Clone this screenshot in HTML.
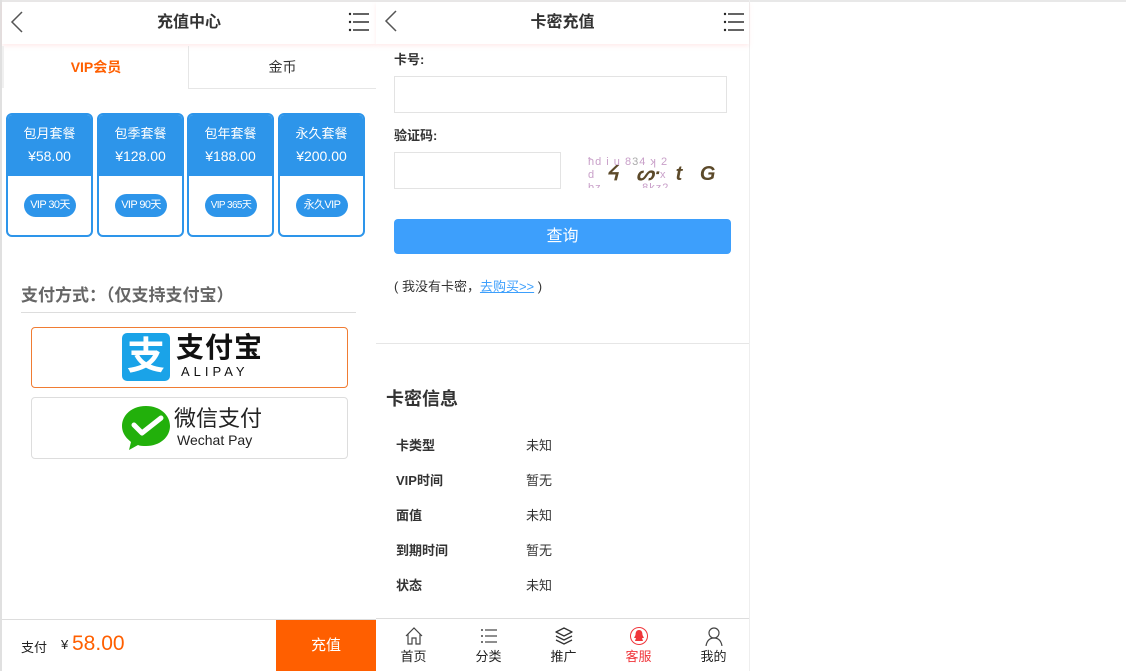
<!DOCTYPE html>
<html><head><meta charset="utf-8"><style>
*{margin:0;padding:0;box-sizing:border-box}
body{width:1126px;height:671px;background:#fff;font-family:"Liberation Sans","Noto Sans CJK SC",sans-serif;position:relative;overflow:hidden;color:#333}
.a{position:absolute}
.hdr{height:42px;box-shadow:0 2px 4px rgba(255,200,200,.35);background:#fff}
.title{font-size:16px;font-weight:bold;text-align:center;line-height:42px;color:#333}
.card{position:absolute;top:113px;width:87px;height:124px;border:2px solid #2d95ea;border-radius:6px;overflow:hidden}
.card .t{background:#2d95ea;height:61px;color:#fff;text-align:center;font-size:13px;padding-top:7px;line-height:23px}
.card .t b{font-weight:normal;font-size:14px}
.pill{position:absolute;left:16px;top:79px;width:52px;height:23px;border-radius:12px;background:#2d95ea;color:#fff;font-size:11px;text-align:center;line-height:23px;white-space:nowrap;letter-spacing:-.6px}
.lbl{font-size:13px;font-weight:bold;color:#333}
.inp{border:1px solid #e3e3e3;background:#fff}
.row{position:absolute;left:396px;font-size:13px}
.nav{position:absolute;top:620px;width:75px;text-align:center;font-size:13px;color:#222}
.nav svg{display:block;margin:6px auto 0}
</style></head><body>
<div class="a" style="left:0;top:0;width:1126px;height:2px;background:#e8e8e8"></div>
<div class="a" style="left:0;top:0;width:2px;height:671px;background:#e0e0e0"></div>
<div class="a" style="left:749px;top:0;width:1px;height:671px;background:#eee"></div>

<!-- LEFT -->
<div class="a hdr" style="left:2px;top:2px;width:374px"><div class="title">充值中心</div></div>
<svg class="a" style="left:10px;top:11px" width="14" height="22"><path d="M12 1 L2 11 L12 21" stroke="#555" stroke-width="1.5" fill="none"/></svg>
<svg class="a" style="left:348px;top:12px" width="22" height="20"><g fill="#222"><circle cx="2" cy="2" r="1.2"/><circle cx="2" cy="10" r="1.2"/><circle cx="2" cy="18" r="1.2"/><rect x="5" y="1.3" width="16" height="1.4"/><rect x="5" y="9.3" width="16" height="1.4"/><rect x="5" y="17.3" width="16" height="1.4"/></g></svg>
<div class="a" style="left:2px;top:46px;width:186px;height:42px;text-align:center;line-height:42px;color:#ff5f00;font-weight:bold;font-size:14px;border-left:2px solid #f0f0f0">VIP会员</div>
<div class="a" style="left:188px;top:46px;width:188px;height:43px;text-align:center;line-height:42px;font-size:14px;border-left:1px solid #e6e6e6;border-bottom:1px solid #e6e6e6">金币</div>

<div class="card" style="left:6px"><div class="t">包月套餐<br><b>¥58.00</b></div><div class="pill">VIP 30天</div></div>
<div class="card" style="left:97px"><div class="t">包季套餐<br><b>¥128.00</b></div><div class="pill">VIP 90天</div></div>
<div class="card" style="left:187px"><div class="t">包年套餐<br><b>¥188.00</b></div><div class="pill" style="font-size:10px">VIP 365天</div></div>
<div class="card" style="left:278px"><div class="t">永久套餐<br><b>¥200.00</b></div><div class="pill">永久VIP</div></div>

<div class="a" style="left:21px;top:281px;font-size:17px;font-weight:bold;color:#666">支付方式：（仅支持支付宝）</div>
<div class="a" style="left:21px;top:312px;width:335px;height:1px;background:#ddd"></div>
<div class="a" style="left:31px;top:327px;width:317px;height:61px;border:1px solid #f07c33;border-radius:4px"></div>
<div class="a" style="left:122px;top:333px;width:48px;height:48px;background:#1aa3e8;border-radius:5px"></div>
<div class="a" style="left:122px;top:333px;width:48px;height:48px;color:#fff;font-size:38px;line-height:48px;text-align:center;font-weight:bold">支</div>
<div class="a" style="left:176px;top:331px;font-size:28px;font-weight:bold;color:#111;letter-spacing:1px;line-height:34px">支付宝</div>
<div class="a" style="left:181px;top:364px;font-size:13px;color:#111;letter-spacing:4px">ALIPAY</div>

<div class="a" style="left:31px;top:397px;width:317px;height:62px;border:1px solid #ddd;border-radius:4px"></div>
<svg class="a" style="left:121px;top:403px" width="50" height="50"><path d="M25 3 C11 3 1 12 1 23 C1 30 5 35 10 39 L8 47 L17 42 C19 43 22 43 25 43 C39 43 49 34 49 23 C49 12 39 3 25 3Z" fill="#22b00b"/><path d="M13 22 L21 30 L40 15" stroke="#fff" stroke-width="5" fill="none" stroke-linecap="round" stroke-linejoin="round"/></svg>
<div class="a" style="left:174px;top:405px;font-size:22px;color:#222;line-height:28px">微信支付</div>
<div class="a" style="left:177px;top:432px;font-size:14px;color:#222">Wechat Pay</div>

<div class="a" style="left:2px;top:619px;width:374px;height:1px;background:#ddd"></div>
<div class="a" style="left:21px;top:637px;font-size:13px;color:#222">支付</div>
<div class="a" style="left:61px;top:637px;font-size:13px;color:#222">¥</div>
<div class="a" style="left:72px;top:632px;font-size:21px;color:#ff5f00">58.00</div>
<div class="a" style="left:276px;top:620px;width:100px;height:51px;background:#ff5f00;color:#fff;font-size:15px;text-align:center;line-height:51px">充值</div>

<!-- RIGHT -->
<div class="a hdr" style="left:376px;top:2px;width:373px"><div class="title">卡密充值</div></div>
<svg class="a" style="left:384px;top:10px" width="14" height="22"><path d="M12 1 L2 11 L12 21" stroke="#555" stroke-width="1.5" fill="none"/></svg>
<svg class="a" style="left:723px;top:12px" width="22" height="20"><g fill="#222"><circle cx="2" cy="2" r="1.2"/><circle cx="2" cy="10" r="1.2"/><circle cx="2" cy="18" r="1.2"/><rect x="5" y="1.3" width="16" height="1.4"/><rect x="5" y="9.3" width="16" height="1.4"/><rect x="5" y="17.3" width="16" height="1.4"/></g></svg>
<div class="a lbl" style="left:394px;top:49px">卡号:</div>
<div class="a inp" style="left:394px;top:76px;width:333px;height:37px"></div>
<div class="a lbl" style="left:394px;top:125px">验证码:</div>
<div class="a inp" style="left:394px;top:152px;width:167px;height:37px"></div>
<div class="a" style="left:588px;top:156px;width:118px;height:32px;font-size:11px;color:#c9a0c9;letter-spacing:1px;line-height:13px;overflow:hidden">ħd i u 8<span style="color:#aaa">3</span>4 ʞ 2<br>d&nbsp;&nbsp;&nbsp;&nbsp;&nbsp;&nbsp;&nbsp;&nbsp;&nbsp;&nbsp;&nbsp;&nbsp;&nbsp;&nbsp;&nbsp;&nbsp;x<br>bz&nbsp;&nbsp;&nbsp;&nbsp;&nbsp;&nbsp;&nbsp;&nbsp;&nbsp;&nbsp;8kz2</div>
<div class="a" style="left:606px;top:161px;font-size:20px;font-weight:bold;color:#5c4a2a;letter-spacing:6px;font-style:italic">ᔦ ᔢ t G</div>
<div class="a" style="left:394px;top:219px;width:337px;height:35px;background:#3d9ffc;border-radius:4px;color:#fff;font-size:16px;text-align:center;line-height:35px">查询</div>
<div class="a" style="left:394px;top:276px;font-size:13px;color:#333">( 我没有卡密，<span style="color:#3d9ffc;text-decoration:underline">去购买&gt;&gt;</span> )</div>
<div class="a" style="left:376px;top:343px;width:373px;height:1px;background:#e6e6e6"></div>
<div class="a" style="left:386px;top:385px;font-size:18px;font-weight:bold;color:#333">卡密信息</div>
<div class="row lbl" style="top:435px">卡类型</div><div class="row" style="left:526px;top:435px">未知</div>
<div class="row lbl" style="top:470px">VIP时间</div><div class="row" style="left:526px;top:470px">暂无</div>
<div class="row lbl" style="top:505px">面值</div><div class="row" style="left:526px;top:505px">未知</div>
<div class="row lbl" style="top:540px">到期时间</div><div class="row" style="left:526px;top:540px">暂无</div>
<div class="row lbl" style="top:575px">状态</div><div class="row" style="left:526px;top:575px">未知</div>

<div class="a" style="left:376px;top:618px;width:373px;height:1px;background:#ddd"></div>
<div class="nav" style="left:376px"><svg width="20" height="20"><path d="M2 10 L10 2 L18 10 M4 8 V18 H8 V12 H12 V18 H16 V8" stroke="#444" stroke-width="1.2" fill="none"/></svg>首页</div>
<div class="nav" style="left:451px"><svg width="20" height="20"><g fill="#444"><circle cx="3" cy="4" r="1"/><circle cx="3" cy="10" r="1"/><circle cx="3" cy="16" r="1"/><rect x="6" y="3.4" width="12" height="1.2"/><rect x="6" y="9.4" width="12" height="1.2"/><rect x="6" y="15.4" width="12" height="1.2"/></g></svg>分类</div>
<div class="nav" style="left:526px"><svg width="20" height="20"><path d="M10 2 L18 6 L10 10 L2 6Z M2 10 L10 14 L18 10 M2 14 L10 18 L18 14" stroke="#333" stroke-width="1.3" fill="none" stroke-linejoin="round"/></svg>推广</div>
<div class="nav" style="left:601px;color:#f0353a"><svg width="20" height="20"><circle cx="10" cy="10" r="8.5" stroke="#f0353a" stroke-width="1" fill="none"/><path d="M10 4 C7 4 6.5 7 6.5 9 L5 12 L7 12 L6 15 L14 15 L13 12 L15 12 L13.5 9 C13.5 7 13 4 10 4Z" fill="#f0353a"/></svg>客服</div>
<div class="nav" style="left:676px"><svg width="20" height="20"><circle cx="10" cy="7" r="5" stroke="#444" stroke-width="1.2" fill="none"/><path d="M2 20 C3 14 6 12 10 12 C14 12 17 14 18 20" stroke="#444" stroke-width="1.2" fill="none"/></svg>我的</div>
</body></html>
